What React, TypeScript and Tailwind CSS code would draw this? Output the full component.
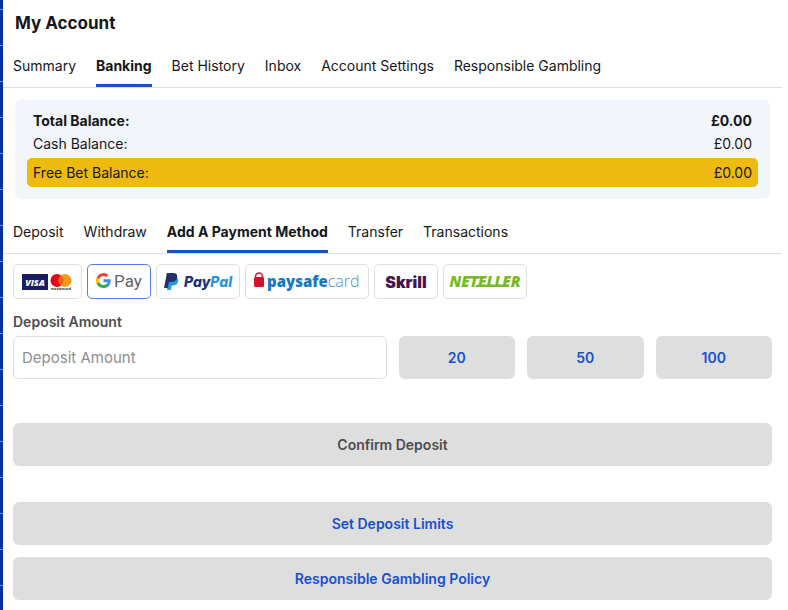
/**
 * Account page, banking section:
 *   title | section tabs | balance card | banking tabs | deposit form
 */
import { useState } from "react";
import type { ReactNode } from "react";

const SECTIONS = ["Summary", "Banking", "Bet History", "Inbox", "Account Settings", "Responsible Gambling"];
const BANKING = ["Deposit", "Withdraw", "Add A Payment Method", "Transfer", "Transactions"];
const QUICK_AMOUNTS = [20, 50, 100];

function CardsLogo() {
  return (
    <svg width="51" height="18" viewBox="0 0 51 18" aria-label="Visa and Mastercard">
      <rect x="0" y="1" width="26" height="16" fill="#1a1a66" />
      <text x="13" y="12.500" textAnchor="middle" fontFamily="Open Sans, sans-serif" fontSize="9" fontWeight="800" fontStyle="italic" fill="#fff">
        VISA
      </text>
      <circle cx="35" cy="7.5" r="6.5" fill="#e2061c" />
      <circle cx="43" cy="7.5" r="6.5" fill="#f49a1c" />
      <path d="M39 2.4a6.5 6.5 0 0 1 0 10.2 6.5 6.5 0 0 1 0-10.2z" fill="#f4600f" />
      <text x="39" y="17" textAnchor="middle" fontFamily="Inter, sans-serif" fontSize="3.6" fontWeight="600" fill="#222">
        mastercard
      </text>
    </svg>
  );
}

function GooglePayLogo() {
  return (
    <svg width="46" height="22" viewBox="0 0 46 22" aria-label="Google Pay">
      <g transform="translate(0 2) scale(0.625)">
        <path fill="#4285f4" d="M23.5 12.3c0-.9-.1-1.5-.3-2.2H12v4.5h6.5c-.3 1.5-1.100 2.700-2.400 3.500v2.900h3.900c2.300-2.100 3.500-5.100 3.500-8.700z" />
        <path fill="#34a853" d="M12 24c3.200 0 5.900-1.100 7.900-2.900l-3.900-3c-1 .7-2.400 1.200-4 1.200-3.100 0-5.700-2.100-6.700-4.900h-4v3.100C3.300 21.400 7.300 24 12 24z" />
        <path fill="#fbbc05" d="M5.300 14.400a7.200 7.200 0 0 1 0-4.700v-3.100h-4a12 12 0 0 0 0 10.800z" />
        <path fill="#ea4335" d="M12 4.700c1.800 0 3.300.6 4.500 1.800L20 3.100A12 12 0 0 0 1.300 6.600l4 3.100c1-2.900 3.600-5 6.700-5z" />
      </g>
      <text x="18" y="16" fontFamily="Roboto, sans-serif" fontSize="17" fill="#5f6368">
        Pay
      </text>
    </svg>
  );
}

function PayPalLogo() {
  return (
    <svg width="69" height="20" viewBox="0 0 69 20" aria-label="PayPal">
      <path d="M4.500 5h7.500c2.100.9 2.500 2.600 2 4.700-.6 2.600-2.500 3.800-5.200 3.800H7.600L6.700 18H3z" fill="#2997d8" />
      <path d="M2.900 1h6.300c3.100 0 4.500 1.700 3.900 4.500-.6 3-2.600 4.400-5.500 4.400H4.900L3.700 16H0z" fill="#22306f" />
      <text x="20" y="15" fontFamily="Inter, sans-serif" fontSize="14" fontWeight="800" fontStyle="italic" fill="#22306f">
        Pay<tspan fill="#2997d8">Pal</tspan>
      </text>
    </svg>
  );
}

function PaysafecardLogo() {
  return (
    <svg width="109" height="22" viewBox="0 0 109 22" aria-label="paysafecard">
      <path d="M2.500 8V5.500a3.500 3.500 0 0 1 7 0V8" fill="none" stroke="#d8102a" strokeWidth="1.600" />
      <rect x="1" y="6" width="10" height="10" rx="1.500" fill="#d8102a" />
      <text x="14" y="16" fontFamily="Open Sans, sans-serif" fontSize="15" fontWeight="800" fill="#1978c0">
        paysafe
        <tspan fontWeight="300" fontSize="16" fill="#3f93cc">card</tspan>
      </text>
    </svg>
  );
}

function SkrillLogo() {
  return (
    <svg width="42" height="20" viewBox="0 0 42 20" aria-label="Skrill">
      <text x="21" y="16" textAnchor="middle" fontFamily="Inter, sans-serif" fontSize="16" fontWeight="900" fill="#45134f">
        Skrill
      </text>
    </svg>
  );
}

function NetellerLogo() {
  return (
    <svg width="72" height="20" viewBox="0 0 72 20" aria-label="Neteller">
      <text x="36" y="15" textAnchor="middle" fontFamily="Open Sans, sans-serif" fontSize="15" fontWeight="800" fontStyle="italic" fill="#7ab829">
        NETELLER
      </text>
      {/* bars that tie the middle letters together */}
      <path d="M15 4.300h20l-.5 2.200h-20zM27 12.800h31l-.5 2.200H26.500z" fill="#7ab829" />
    </svg>
  );
}

const METHODS: { id: string; width: string; logo: ReactNode }[] = [
  { id: "cards", width: "w-[69px]", logo: <CardsLogo /> },
  { id: "gpay", width: "w-16", logo: <GooglePayLogo /> },
  { id: "paypal", width: "w-21", logo: <PayPalLogo /> },
  { id: "paysafecard", width: "w-31", logo: <PaysafecardLogo /> },
  { id: "skrill", width: "w-16", logo: <SkrillLogo /> },
  { id: "neteller", width: "w-21", logo: <NetellerLogo /> },
];

function Tabs({ items, initial }: { items: string[]; initial: string }) {
  const [active, setActive] = useState(initial);
  return (
    <nav className="flex gap-5 border-b border-[#dcdfe3] px-[10px]">
      {items.map((item) => (
        <button
          key={item}
          type="button"
          onClick={() => setActive(item)}
          className={
            item === active
              ? "h-[42px] border-b-3 border-[#1650d4] pt-[2px] font-bold whitespace-nowrap"
              : "h-[42px] border-b-3 border-transparent pt-[2px] whitespace-nowrap"
          }
        >
          {item}
        </button>
      ))}
    </nav>
  );
}

function ActionButton({ children, className }: { children: ReactNode; className: string }) {
  return (
    <button type="button" className={`h-[43px] rounded-md bg-[#dedede] font-semibold ${className}`}>
      {children}
    </button>
  );
}

export default function App() {
  const [method, setMethod] = useState("gpay");
  const [amount, setAmount] = useState("");

  return (
    <div className="flex min-h-screen bg-white font-['Inter',sans-serif] text-sm text-[#14171c]">
      {/* edge of the page behind the panel */}
      <div className="w-[3px] shrink-0 bg-[#03309c] bg-[linear-gradient(#7b90cf_1px,transparent_1px)] [background-position:0_9px] [background-size:100%_36px]" />
      <main className="mr-[6px] min-w-0 flex-1 pb-[10px]">
        <h1 className="h-[45px] px-3 pt-[11px] text-[17px] leading-6 font-bold">My Account</h1>
        <Tabs items={SECTIONS} initial="Banking" />

        <dl className="mx-3 mt-3 mb-3 rounded-md bg-[#f2f5f9] px-3 pt-[10px] pb-3">
          <div className="flex h-[22px] items-center justify-between px-[6px] font-bold">
            <dt>Total Balance:</dt>
            <dd>£0.00</dd>
          </div>
          <div className="mt-px flex h-[22px] items-center justify-between px-[6px]">
            <dt>Cash Balance:</dt>
            <dd>£0.00</dd>
          </div>
          <div className="mt-[3px] flex h-[29px] items-center justify-between rounded-[5px] bg-[#efba10] px-[6px]">
            <dt>Free Bet Balance:</dt>
            <dd>£0.00</dd>
          </div>
        </dl>

        <Tabs items={BANKING} initial="Add A Payment Method" />

        <form className="px-[10px] pt-[10px]" onSubmit={(e) => e.preventDefault()}>
          <div className="flex flex-wrap gap-[5px]">
            {METHODS.map((m) => (
              <button
                key={m.id}
                type="button"
                aria-pressed={m.id === method}
                onClick={() => setMethod(m.id)}
                className={`flex h-[35px] items-center justify-center rounded-[5px] border ${m.width} ${
                  m.id === method ? "border-[#4b83e6]" : "border-[#dedfe2]"
                }`}
              >
                {m.logo}
              </button>
            ))}
          </div>

          <label htmlFor="amount" className="mt-[13px] block leading-5 font-semibold text-[#4d4d4d]">
            Deposit Amount
          </label>
          <div className="mt-1 grid grid-cols-6 gap-3">
            <input
              id="amount"
              type="text"
              inputMode="decimal"
              placeholder="Deposit Amount"
              value={amount}
              onChange={(e) => setAmount(e.target.value)}
              className="col-span-3 h-[43px] min-w-0 rounded-md border border-[#dedfe2] px-2 text-[15px] placeholder:text-[#8e8e8e]"
            />
            {QUICK_AMOUNTS.map((value) => (
              <button
                key={value}
                type="button"
                onClick={() => setAmount(String(value))}
                className="h-[43px] rounded-md bg-[#dedede] font-semibold text-[#1650d4]"
              >
                {value}
              </button>
            ))}
          </div>

          <ActionButton className="mt-11 w-full text-[#4d4d4d]">Confirm Deposit</ActionButton>
          <ActionButton className="mt-9 w-full text-[#1650d4]">Set Deposit Limits</ActionButton>
          <ActionButton className="mt-3 w-full text-[#1650d4]">Responsible Gambling Policy</ActionButton>
        </form>
      </main>
    </div>
  );
}
